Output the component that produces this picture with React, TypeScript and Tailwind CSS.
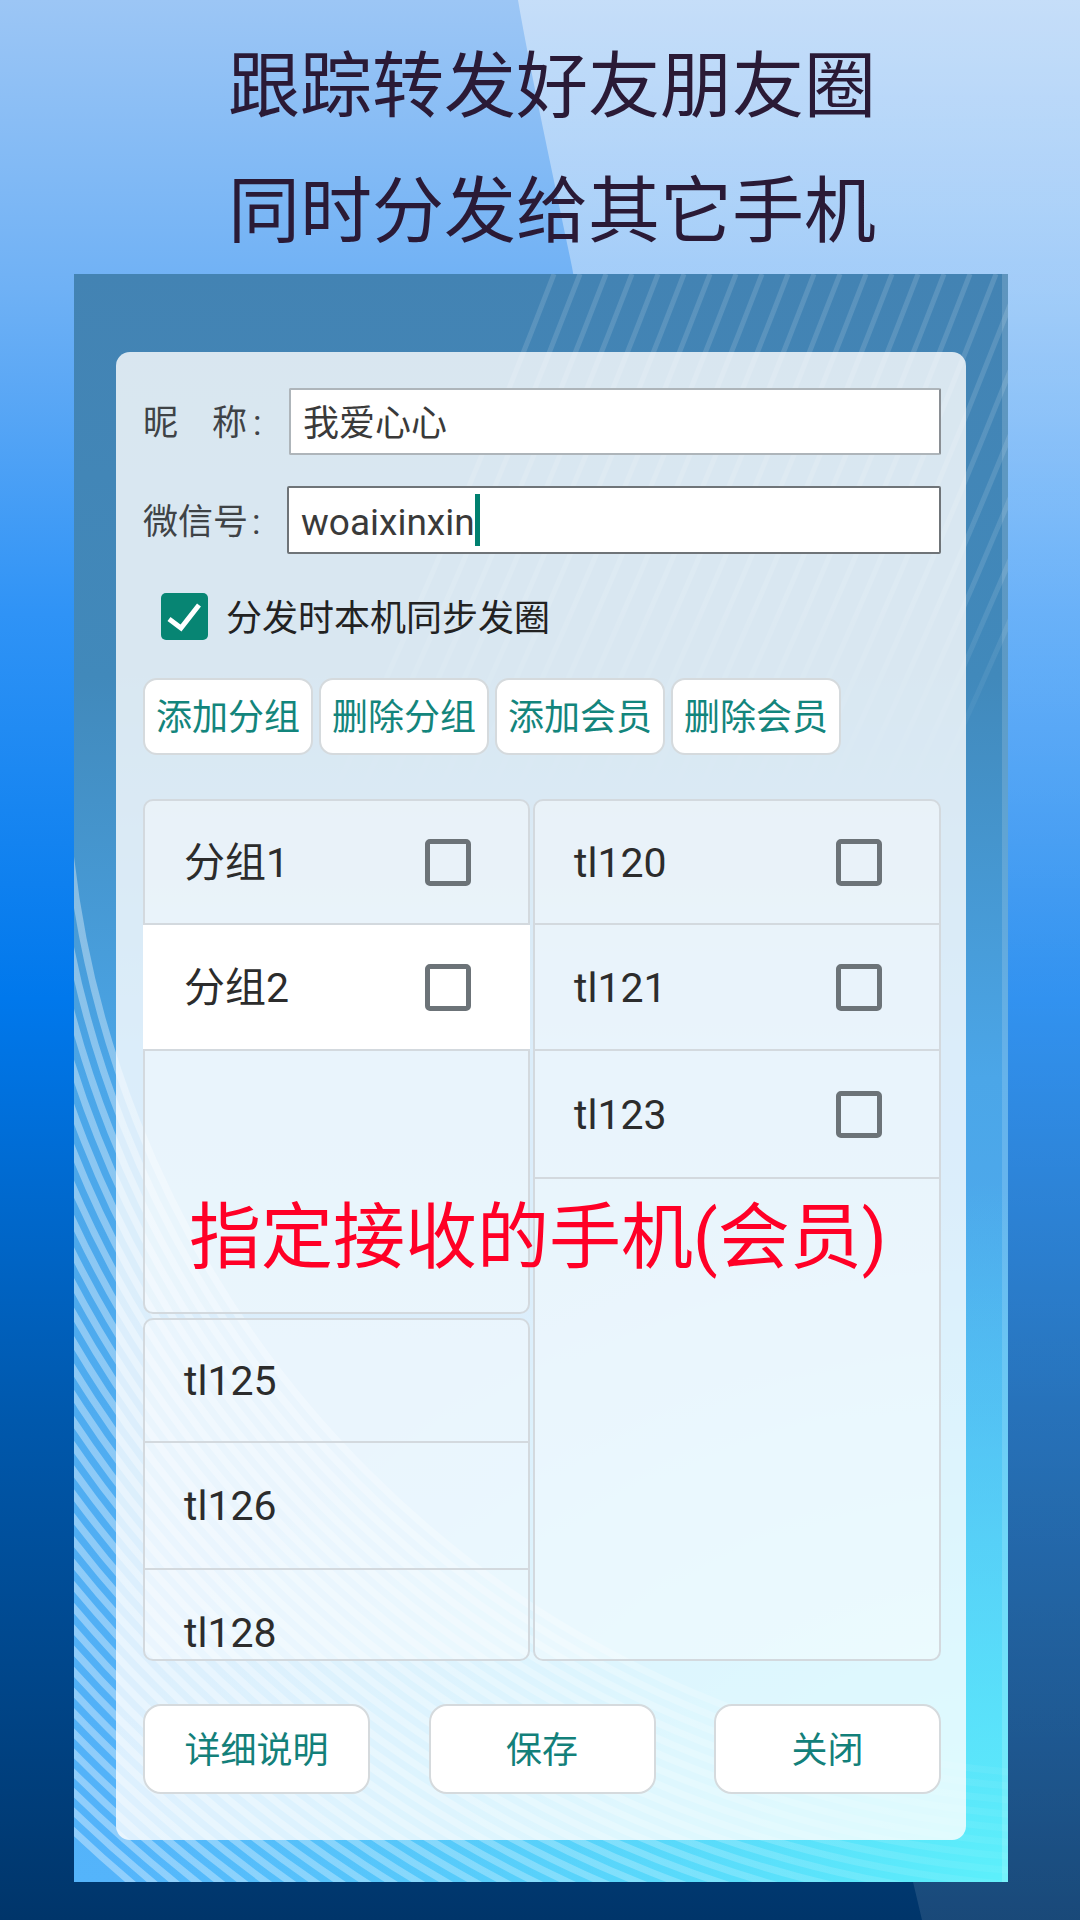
const FONT = "font-['Roboto','Noto_Sans_CJK_SC',sans-serif]"

const arcs = Array.from({ length: 34 }, (_, i) => 1036 + i * 14)
const rakes = Array.from({ length: 24 }, (_, i) => 420 + i * 26)

function Backdrop() {
  return (
    <svg className="absolute inset-0" width="1080" height="1920" viewBox="0 0 1080 1920">
      <defs>
        <linearGradient id="sheen" x1="0" y1="0" x2="0" y2="1">
          <stop offset="0" stopColor="#fff" stopOpacity="0.42" />
          <stop offset="0.5" stopColor="#fff" stopOpacity="0.2" />
          <stop offset="1" stopColor="#fff" stopOpacity="0.1" />
        </linearGradient>
      </defs>
      <path d="M518 0C530 70 550 160 572 267C640 650 800 1400 922 1920H1080V0Z" fill="url(#sheen)" />
    </svg>
  )
}

function Waves() {
  return (
    <svg className="absolute inset-0" width="934" height="1608" viewBox="0 0 934 1608">
      <defs>
        <linearGradient id="rakeFade" gradientUnits="userSpaceOnUse" x1="0" y1="0" x2="0" y2="520">
          <stop offset="0" stopColor="#fff" stopOpacity="0.13" />
          <stop offset="0.6" stopColor="#fff" stopOpacity="0.11" />
          <stop offset="1" stopColor="#fff" stopOpacity="0" />
        </linearGradient>
        <linearGradient id="arcFade" gradientUnits="userSpaceOnUse" x1="0" y1="0" x2="934" y2="0">
          <stop offset="0" stopColor="#fff" stopOpacity="0.36" />
          <stop offset="0.6" stopColor="#fff" stopOpacity="0.24" />
          <stop offset="1" stopColor="#fff" stopOpacity="0.04" />
        </linearGradient>
      </defs>
      {arcs.map((r) => (
        <path
          key={r}
          d={`M${1026 - r} 466A${r} ${r} 0 0 0 1026 ${466 + r}`}
          fill="none"
          stroke="url(#arcFade)"
          strokeWidth="7"
        />
      ))}
      {rakes.map((x) => (
        <path key={x} d={`M${x - 160} 520Q${x - 40} 260 ${x + 60} 0`} fill="none" stroke="url(#rakeFade)" strokeWidth="5" />
      ))}
    </svg>
  )
}

function Box() {
  return <span className="block w-[46px] h-[47px] border-[5px] border-[#6c7378] rounded-[5px]" />
}

function Row({ label, box, height, active }: { label: string; box?: boolean; height: string; active?: boolean }) {
  return (
    <div
      className={`${height} shrink-0 flex items-center justify-between pl-[39px] pr-[57px] border-b-2 border-[#d3d9de] text-[41px] text-[#2c2c2c] ${
        active ? '-mx-[2px] pl-[41px] pr-[59px] bg-white' : ''
      }`}
    >
      <span className="pt-[3px]">{label}</span>
      {box && <Box />}
    </div>
  )
}

function SmallButton({ label }: { label: string }) {
  return (
    <div className="w-[170px] h-[77px] flex items-center justify-center pt-[3px] bg-white border-2 border-[#d5dadd] rounded-[14px] text-[36px] text-[#13857c]">
      {label}
    </div>
  )
}

function BigButton({ label }: { label: string }) {
  return (
    <div className="w-[227px] h-[90px] flex items-center justify-center pt-[3px] bg-white border-2 border-[#d5dadd] rounded-[18px] text-[36px] text-[#13807a]">
      {label}
    </div>
  )
}

export default function App() {
  return (
    <div className={`${FONT} relative w-[1080px] h-[1920px] overflow-hidden bg-[linear-gradient(180deg,#9cc6f5_0%,#6fb1f5_15%,#2f93f6_32%,#0078ec_52%,#0058ac_74%,#00356a_100%)]`}>
      <Backdrop />
      <div className="relative pt-[24px] pl-[24px] text-center text-[72px] leading-[125px] text-[#2a1a36]">
        <div>跟踪转发好友朋友圈</div>
        <div>同时分发给其它手机</div>
      </div>

      <div className="relative ml-[74px] w-[934px] h-[1608px] overflow-hidden pt-[78px] pl-[42px] bg-[radial-gradient(900px_700px_at_100%_100%,#5cf0fb_0%,#5cf0fb00_100%),linear-gradient(180deg,#4383b3_0%,#4189bb_25%,#4ba6e8_50%,#54b4fb_100%)]">
        <Waves />
        <span className="absolute right-0 inset-y-0 w-[6px] bg-white/15" />
        <div className="relative w-[850px] h-[1488px] rounded-[14px] bg-white/80 pt-[36px] pl-[27px] pr-[25px]">
          <div className="flex items-center h-[67px]">
            <span className="w-[146px] flex pt-[6px] text-[35px] text-[#3f4346]">
              <span>昵</span>
              <span className="ml-[34px]">称</span>
              <span className="ml-[6px]">:</span>
            </span>
            <div className="flex-1 h-full flex items-center pl-[12px] pt-[4px] bg-white border-2 border-[#aeb5ba] border-r-[#8a8f94] rounded-[2px] text-[36px] text-[#3a3a3a]">
              我爱心心
            </div>
          </div>
          <div className="flex items-center h-[68px] mt-[31px]">
            <span className="w-[144px] flex pt-[7px] text-[35px] text-[#3f4346]">
              <span>微信号</span>
              <span className="ml-[4px]">:</span>
            </span>
            <div className="flex-1 h-full flex items-center pl-[12px] pt-[6px] bg-white border-2 border-[#6f7478] rounded-[2px] text-[37px] text-[#3a3a3a]">
              woaixinxin
              <span className="w-[5px] h-[52px] -mt-[6px] bg-[#00806f]" />
            </div>
          </div>
          <div className="flex items-center h-[47px] mt-[39px] pl-[18px] gap-[18px]">
            <span className="w-[47px] h-[47px] rounded-[5px] bg-[#078573] flex items-center justify-center">
              <svg width="47" height="47" viewBox="0 0 47 47">
                <path d="M8 26L20 35L38 12" fill="none" stroke="#fff" strokeWidth="5" />
              </svg>
            </span>
            <span className="pt-[4px] text-[36px] text-[#222]">分发时本机同步发圈</span>
          </div>
          <div className="flex gap-[6px] mt-[38px]">
            <SmallButton label="添加分组" />
            <SmallButton label="删除分组" />
            <SmallButton label="添加会员" />
            <SmallButton label="删除会员" />
          </div>

          <div className="flex gap-[3px] mt-[44px] h-[862px]">
            <div className="w-[387px] flex flex-col gap-[4px]">
              <div className="h-[515px] bg-white/40 border-2 border-[#d3d9de] rounded-[10px]">
                <Row label="分组1" box height="h-[124px]" />
                <Row label="分组2" box height="h-[126px]" active />
              </div>
              <div className="h-[343px] bg-white/40 border-2 border-[#d3d9de] rounded-[10px] overflow-hidden">
                <Row label="tl125" height="h-[123px]" />
                <Row label="tl126" height="h-[127px]" />
                <Row label="tl128" height="h-[127px]" />
              </div>
            </div>
            <div className="w-[408px] h-full bg-white/40 border-2 border-[#d3d9de] rounded-[10px] overflow-hidden">
              <Row label="tl120" box height="h-[124px]" />
              <Row label="tl121" box height="h-[126px]" />
              <Row label="tl123" box height="h-[128px]" />
            </div>
          </div>

          <div className="flex justify-between mt-[43px]">
            <BigButton label="详细说明" />
            <BigButton label="保存" />
            <BigButton label="关闭" />
          </div>
        </div>
        <span className="absolute left-[115px] top-[914px] text-[72px] leading-[100px] text-[#ff0026] whitespace-nowrap">
          指定接收的手机(会员)
        </span>
      </div>
    </div>
  )
}
